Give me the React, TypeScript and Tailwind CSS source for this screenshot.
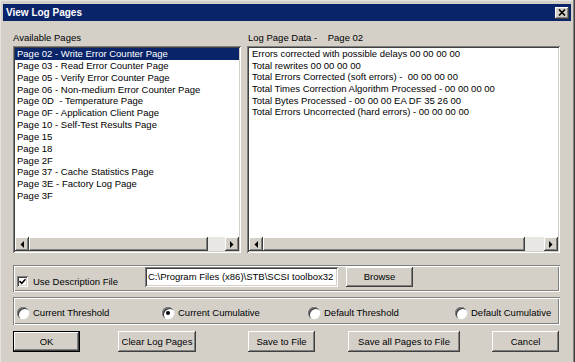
import React from 'react';

const pages = [
    'Page 02 - Write Error Counter Page',
    'Page 03 - Read Error Counter Page',
    'Page 05 - Verify Error Counter Page',
    'Page 06 - Non-medium Error Counter Page',
    'Page 0D  - Temperature Page',
    'Page 0F - Application Client Page',
    'Page 10 - Self-Test Results Page',
    'Page 15',
    'Page 18',
    'Page 2F',
    'Page 37 - Cache Statistics Page',
    'Page 3E - Factory Log Page',
    'Page 3F',
];

const logData = [
    'Errors corrected with possible delays 00 00 00 00',
    'Total rewrites 00 00 00 00',
    'Total Errors Corrected (soft errors) -  00 00 00 00',
    'Total Times Correction Algorithm Processed - 00 00 00 00',
    'Total Bytes Processed - 00 00 00 EA DF 35 26 00',
    'Total Errors Uncorrected (hard errors) - 00 00 00 00',
];

const raised = 'bg-[#d4d0c8] shadow-[inset_-1px_-1px_0_#404040,inset_1px_1px_0_#ffffff,inset_-2px_-2px_0_#808080]';
const sunken = 'bg-white shadow-[inset_1px_1px_0_#808080,inset_-1px_-1px_0_#ffffff,inset_2px_2px_0_#404040,inset_-2px_-2px_0_#d4d0c8]';
const etched = 'shadow-[inset_1px_1px_0_#808080,inset_-1px_-1px_0_#ffffff,inset_2px_2px_0_#ffffff,inset_-2px_-2px_0_#808080]';

// Little arrow button at each end of a scrollbar
function ArrowButton({ dir }: { dir: 'left' | 'right' }) {
    return (
        <div className={`w-[14px] h-[14px] flex items-center justify-center ${raised}`}>
            <svg width="4" height="7" viewBox="0 0 4 7">
                {dir === 'left'
                    ? <polygon points="4,0 4,7 0.5,3.5" fill="#000" />
                    : <polygon points="0,0 0,7 3.5,3.5" fill="#000" />}
            </svg>
        </div>
    );
}

function HScrollBar({ thumb }: { thumb: string }) {
    return (
        <div className="h-[14px] flex shrink-0">
            <ArrowButton dir="left" />
            <div className={`${thumb} h-[14px] ${raised}`}></div>
            <div className="flex-1 bg-[#e9e7e3]"></div>
            <ArrowButton dir="right" />
        </div>
    );
}

function Radio({ label, checked, className }: { label: string; checked?: boolean; className?: string }) {
    return (
        <div className={`flex items-center gap-[4px] ${className ?? ''}`}>
            <div className="w-[12px] h-[12px] rounded-full bg-white shadow-[inset_1px_1px_0_#808080,inset_2px_2px_0_#404040,0_0_0_0.5px_#e8e8e8] flex items-center justify-center">
                {checked && <div className="w-[4px] h-[4px] rounded-full bg-black"></div>}
            </div>
            <span>{label}</span>
        </div>
    );
}

export default function App() {
    return (
        <div className="w-[575px] h-[362px] overflow-hidden bg-[#d4d0c8] pt-[4px] pl-[3px] pr-[4px] flex flex-col font-['Liberation_Sans',Arial,sans-serif] text-[9.5px] leading-[12px] text-black shadow-[inset_-1px_0_0_#404040,inset_-2px_0_0_#808080,inset_0_1px_0_#e6e4e0,inset_1px_0_0_#e6e4e0]">
            {/* Title bar */}
            <div className="h-[17px] shrink-0 bg-[#0a246a] flex items-center justify-between pl-[3px] pr-[2px]">
                <span className="text-white font-bold text-[10px]">View Log Pages</span>
                <div className={`w-[14px] h-[12px] flex items-center justify-center ${raised}`}>
                    <svg width="8" height="7" viewBox="0 0 8 7">
                        <path d="M1 0.5 L7 6.5 M7 0.5 L1 6.5" stroke="#000" strokeWidth="1.6" />
                    </svg>
                </div>
            </div>

            {/* Body */}
            <div className="flex flex-col pl-[10px] pr-[11px]">
                <div className="flex gap-[6px]">
                    {/* Available pages */}
                    <div className="w-[228px] flex flex-col">
                        <div className="h-[25px] pt-[11px]">Available Pages</div>
                        <div className={`h-[207px] p-[2px] flex flex-col ${sunken}`}>
                            <ul className="flex-1">
                                {pages.map((p, i) => (
                                    <li
                                        key={p}
                                        className={`h-[11.85px] leading-[11.85px] pl-[2px] whitespace-pre ${i === 0 ? 'bg-[#0a246a] text-white' : ''}`}
                                    >
                                        {p}
                                    </li>
                                ))}
                            </ul>
                            <HScrollBar thumb="w-[179px]" />
                        </div>
                    </div>

                    {/* Log page data */}
                    <div className="w-[313px] flex flex-col">
                        <div className="h-[25px] pt-[11px] pl-[1px] whitespace-pre">Log Page Data -    Page 02</div>
                        <div className={`h-[207px] p-[2px] flex flex-col ${sunken}`}>
                            <div className="flex-1 pl-[3px]">
                                {logData.map((line) => (
                                    <div key={line} className="h-[11.7px] leading-[11.7px] whitespace-pre">{line}</div>
                                ))}
                            </div>
                            <HScrollBar thumb="w-[262px]" />
                        </div>
                    </div>
                </div>

                {/* Description file */}
                <div className={`mt-[12px] h-[27px] flex px-[1px] py-[1px] ${etched}`}>
                    <div className="w-[131px] flex items-center pt-[6px] pl-[3px] gap-[5px]">
                        <div className={`w-[11px] h-[11px] flex items-center justify-center ${sunken}`}>
                            <svg width="7" height="7" viewBox="0 0 7 7">
                                <path d="M0.5 3 L2.7 5.3 L6.5 1.2" stroke="#000" strokeWidth="1.6" fill="none" />
                            </svg>
                        </div>
                        <span>Use Description File</span>
                    </div>
                    <div className={`mt-[1px] w-[193px] h-[20px] pl-[3px] pt-[4px] overflow-hidden whitespace-nowrap ${sunken}`}>
                        C:\Program Files (x86)\STB\SCSI toolbox32
                    </div>
                    <button className={`ml-[8px] mt-[1px] w-[67px] h-[20px] ${raised}`}>Browse</button>
                </div>

                {/* Threshold options */}
                <div className={`mt-[5px] h-[28px] flex items-center pt-[3px] pl-[4px] ${etched}`}>
                    <Radio label="Current Threshold" className="w-[145px]" />
                    <Radio label="Current Cumulative" checked className="w-[146px]" />
                    <Radio label="Default Threshold" className="w-[147px]" />
                    <Radio label="Default Cumulative" />
                </div>

                {/* Buttons */}
                <div className="mt-[6px] h-[21px] flex">
                    <button className="w-[67px] h-[21px] border border-black bg-[#d4d0c8] shadow-[inset_-1px_-1px_0_#404040,inset_1px_1px_0_#ffffff,inset_-2px_-2px_0_#808080]">OK</button>
                    <button className={`ml-[38px] w-[78px] h-[21px] ${raised}`}>Clear Log Pages</button>
                    <button className={`ml-[52px] w-[67px] h-[21px] ${raised}`}>Save to File</button>
                    <button className={`ml-[33px] w-[112px] h-[21px] ${raised}`}>Save all Pages to File</button>
                    <button className={`ml-[32px] w-[67px] h-[21px] ${raised}`}>Cancel</button>
                </div>
            </div>
        </div>
    );
}
